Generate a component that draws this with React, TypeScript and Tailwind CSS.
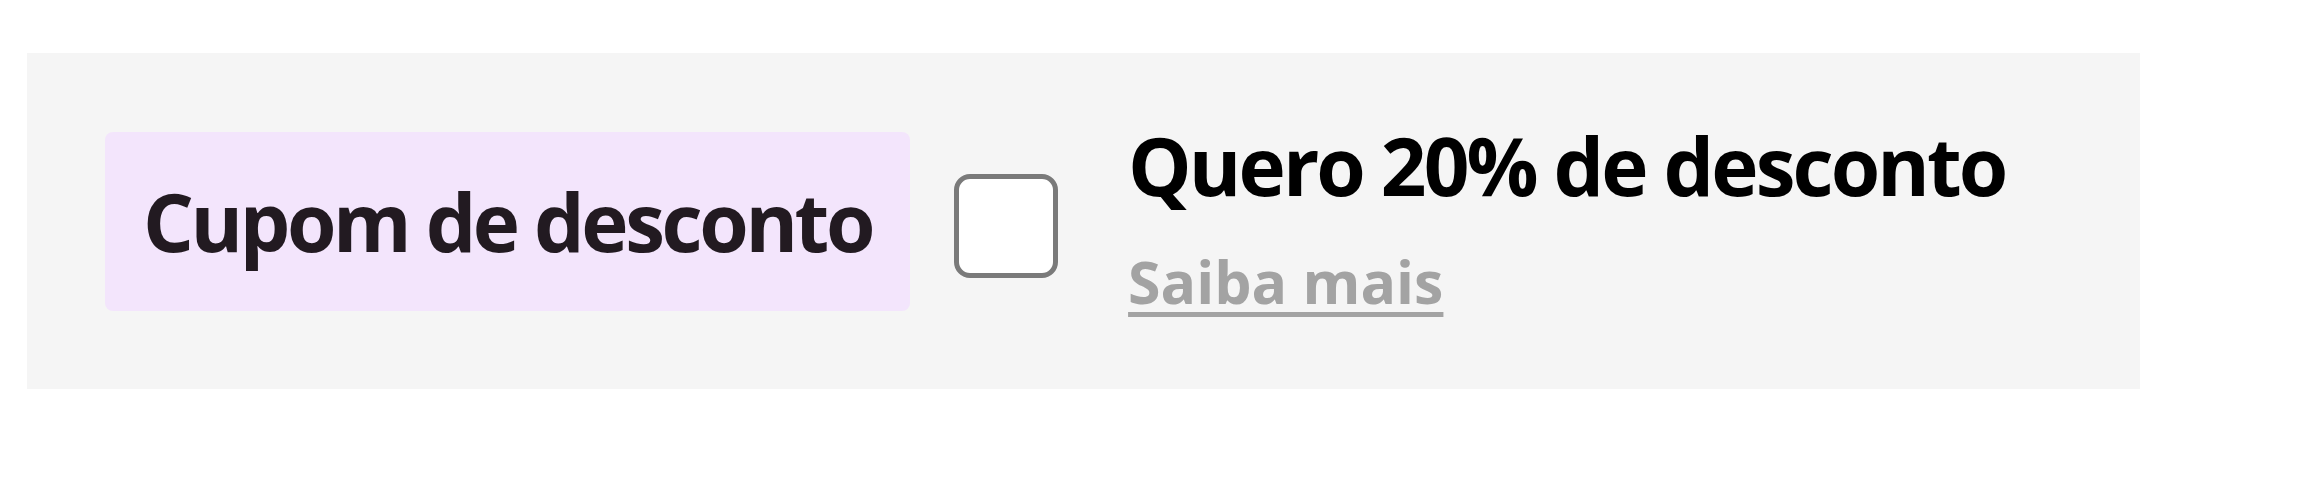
export default function App() {
  return (
    <div className="w-[2300px] h-[500px] bg-white pt-[53px] pl-[27px] font-['Open_Sans',sans-serif]">
      <div className="w-[2113px] h-[336px] bg-[#f5f5f5] flex items-center pl-[78px]">
        {/* coupon label */}
        <div className="h-[179px] flex items-center px-[38px] rounded-lg bg-[#f3e5fc]">
          <span className="text-[80px] leading-none font-bold tracking-[-3.4px] text-[#221a21]">
            Cupom de desconto
          </span>
        </div>

        {/* checkbox */}
        <div className="ml-[44px] mt-[10px] w-[104px] h-[104px] rounded-[16px] border-[5px] border-[#7a7a7a] bg-white" />

        {/* option text */}
        <div className="ml-[70px] pb-[6px] flex flex-col">
          <span className="text-[80px] leading-none font-bold tracking-[-2.9px] text-black">
            Quero 20% de desconto
          </span>
          <a href="#" className="mt-[47px] text-[59px] leading-none font-bold text-[#a3a3a3] underline decoration-[5px] underline-offset-[8px]">
            Saiba mais
          </a>
        </div>
      </div>
    </div>
  );
}
